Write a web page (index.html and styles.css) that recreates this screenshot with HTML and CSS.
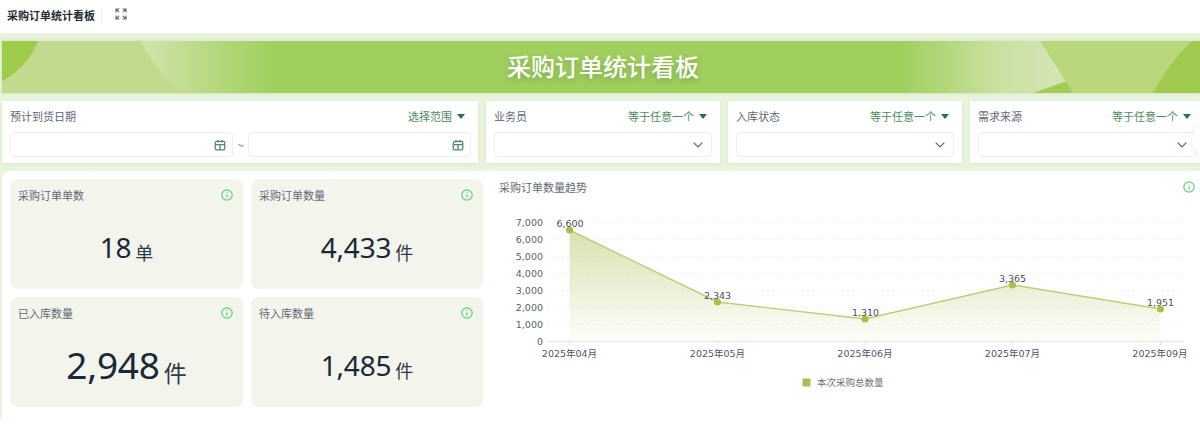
FILE: index.html
```html
<!DOCTYPE html>
<html lang="zh">
<head>
<meta charset="utf-8">
<title>采购订单统计看板</title>
<link rel="stylesheet" href="styles.css">
</head>
<body>
<header class="topbar">
  <span class="topbar-title">采购订单统计看板</span>
  <span class="topbar-div"></span>
  <svg class="fs-icon" viewBox="0 0 12 12" width="12" height="12"><path d="M1 4.500V1h3.500M1 1l3 3M7.500 1H11v3.500M11 1L8 4M1 7.500V11h3.500M1 11l3-3M7.500 11H11V7.500M11 11L8 8"/></svg>
</header>
<main class="page">
  <section class="banner">
    <svg class="banner-art" viewBox="0 0 1198 52" preserveAspectRatio="none" aria-hidden="true">
      <defs>
        <linearGradient id="bl" x1="0" x2="1" y1="0" y2="0"><stop offset="0" stop-color="#d2e4ab"/><stop offset="1" stop-color="#a0cf5e"/></linearGradient>
        <linearGradient id="br" x1="0" x2="1" y1="0" y2="0"><stop offset="0" stop-color="#a0cf5e"/><stop offset="0.55" stop-color="#c9e09f"/><stop offset="1" stop-color="#d7e5b8"/></linearGradient>
      </defs>
      <rect width="1198" height="52" fill="#a0cf5e"/>
      <path d="M0 0H138Q156 32 178 52H0Z" fill="#c1da8d"/>
      <path d="M138 0Q156 32 178 52H270V0Z" fill="url(#bl)"/>
      <path d="M0 40Q26 26 36 0H0Z" fill="#9ecb48"/>
      <path d="M898 0H1038Q1055 25 1071 52H898Z" fill="url(#br)"/>
      <path d="M1031 52L1065 40L1071 52Z" fill="#a4cc55"/>
      <path d="M1038 0H1198V52H1071Q1055 25 1038 0Z" fill="#b8d67a"/>
      <path d="M1190 0Q1168 20 1151 52H1198V0Z" fill="#a0ca4f"/>
    </svg>
    <h1 class="banner-title">采购订单统计看板</h1>
  </section>

  <section class="filters">
    <div class="filter filter-date">
      <div class="filter-head"><span class="filter-label">预计到货日期</span><span class="filter-op">选择范围<i class="caret"></i></span></div>
      <div class="date-row">
        <div class="input"><svg class="cal" viewBox="0 0 12 12" width="12" height="12"><rect x="1.200" y="2.400" width="9.600" height="8.400" rx="1.600"/><path d="M1.200 5.600h9.600M4 1v2.500M8 1v2.500M6 5.600v5.200"/></svg></div>
        <span class="tilde">~</span>
        <div class="input"><svg class="cal" viewBox="0 0 12 12" width="12" height="12"><rect x="1.200" y="2.400" width="9.600" height="8.400" rx="1.600"/><path d="M1.200 5.600h9.600M4 1v2.500M8 1v2.500M6 5.600v5.200"/></svg></div>
      </div>
    </div>
    <div class="filter">
      <div class="filter-head"><span class="filter-label">业务员</span><span class="filter-op">等于任意一个<i class="caret"></i></span></div>
      <div class="input"><svg class="chev" viewBox="0 0 10 6" width="10" height="6"><path d="M.7.7L5 5l4.300-4.300"/></svg></div>
    </div>
    <div class="filter">
      <div class="filter-head"><span class="filter-label">入库状态</span><span class="filter-op">等于任意一个<i class="caret"></i></span></div>
      <div class="input"><svg class="chev" viewBox="0 0 10 6" width="10" height="6"><path d="M.7.7L5 5l4.300-4.300"/></svg></div>
    </div>
    <div class="filter">
      <div class="filter-head"><span class="filter-label">需求来源</span><span class="filter-op">等于任意一个<i class="caret"></i></span></div>
      <div class="input"><svg class="chev" viewBox="0 0 10 6" width="10" height="6"><path d="M.7.7L5 5l4.300-4.300"/></svg></div>
    </div>
  </section>

  <section class="panel">
    <div class="kpis">
      <article class="kpi">
        <div class="kpi-head"><span>采购订单单数</span><svg class="info" viewBox="0 0 12 12" width="12" height="12"><circle cx="6" cy="6" r="5.200"/><path d="M6 5.200v3.400M6 3.200v.9"/></svg></div>
        <div class="kpi-value"><b>18</b><small>单</small></div>
      </article>
      <article class="kpi">
        <div class="kpi-head"><span>采购订单数量</span><svg class="info" viewBox="0 0 12 12" width="12" height="12"><circle cx="6" cy="6" r="5.200"/><path d="M6 5.200v3.400M6 3.200v.9"/></svg></div>
        <div class="kpi-value"><b>4,433</b><small>件</small></div>
      </article>
      <article class="kpi">
        <div class="kpi-head"><span>已入库数量</span><svg class="info" viewBox="0 0 12 12" width="12" height="12"><circle cx="6" cy="6" r="5.200"/><path d="M6 5.200v3.400M6 3.200v.9"/></svg></div>
        <div class="kpi-value kpi-value-lg"><b>2,948</b><small>件</small></div>
      </article>
      <article class="kpi">
        <div class="kpi-head"><span>待入库数量</span><svg class="info" viewBox="0 0 12 12" width="12" height="12"><circle cx="6" cy="6" r="5.200"/><path d="M6 5.200v3.400M6 3.200v.9"/></svg></div>
        <div class="kpi-value"><b>1,485</b><small>件</small></div>
      </article>
    </div>
    <div class="chart">
      <div class="chart-head"><span>采购订单数量趋势</span><svg class="info" viewBox="0 0 12 12" width="12" height="12"><circle cx="6" cy="6" r="5.200"/><path d="M6 5.200v3.400M6 3.200v.9"/></svg></div>
      <svg class="plot" viewBox="0 0 710 210" width="710" height="210">
        <defs>
          <linearGradient id="area" x1="0" x2="0" y1="0" y2="1"><stop offset="0" stop-color="#b5c15f" stop-opacity=".5"/><stop offset="1" stop-color="#b5c15f" stop-opacity=".02"/></linearGradient>
        </defs>
        <g class="grid">
          <path d="M57 16.500H694M57 33.500H694M57 50.500H694M57 67.500H694M57 84.500H694M57 101.500H694M57 118.500H694"/>
        </g>
        <path class="axis" d="M57 135.500H694"/>
        <path class="ticks" d="M79.500 135v4M227.500 135v4M375 135v4M522.500 135v4M670.500 135v4"/>
        <path d="M79.500 24L227.500 96L375 113L522.500 79L670.500 103V135.500H79.500Z" fill="url(#area)"/>
        <path class="line" d="M79.500 24L227.500 96L375 113L522.500 79L670.500 103"/>
        <g class="dots">
          <circle cx="79.500" cy="24" r="3.500"/><circle cx="227.500" cy="96" r="3.500"/><circle cx="375" cy="113" r="3.500"/><circle cx="522.500" cy="79" r="3.500"/><circle cx="670.500" cy="103" r="3.500"/>
        </g>
        <g class="ylab">
          <text x="53" y="20">7,000</text><text x="53" y="37">6,000</text><text x="53" y="54">5,000</text><text x="53" y="71">4,000</text><text x="53" y="88">3,000</text><text x="53" y="105">2,000</text><text x="53" y="122">1,000</text><text x="53" y="139">0</text>
        </g>
        <g class="xlab">
          <text x="79.500" y="151">2025年04月</text><text x="227.500" y="151">2025年05月</text><text x="375" y="151">2025年06月</text><text x="522.500" y="151">2025年07月</text><text x="670" y="151">2025年09月</text>
        </g>
        <g class="vlab">
          <text x="80" y="21">6,600</text><text x="227.500" y="93">2,343</text><text x="375.500" y="110">1,310</text><text x="522.500" y="76">3,365</text><text x="670.500" y="100">1,951</text>
        </g>
        <rect class="legend-sq" x="312.500" y="172.500" width="8" height="8"/>
        <text class="legend-tx" x="327" y="180">本次采购总数量</text>
      </svg>
    </div>
  </section>
</main>
<div class="float-btn"></div>
</body>
</html>
```

FILE: styles.css
```css
* { box-sizing: border-box; }
html, body { margin: 0; height: 424px; overflow: hidden; }
body { background: #fff; font-family: "Noto Sans CJK SC", "Noto Sans", sans-serif; color: #4c5563; position: relative; }

.topbar { height: 33px; background: #fff; display: flex; align-items: center; padding: 0 0 3px 7px; }
.topbar-title { font-size: 11px; font-weight: 700; color: #262b33; line-height: 16px; }
.topbar-div { width: 1px; height: 15px; background: #eceeea; margin-left: 6px; }
.fs-icon { margin: -2px 0 0 13px; fill: none; stroke: #5b6470; stroke-width: 1.1; }

.page { padding: 8px 0 0 2px; width: 1206px; height: 386px; background: #e9f3dd; }

.banner { height: 52px; width: 1198px; position: relative; display: flex; align-items: center; justify-content: center; padding-left: 4px; box-shadow: 0 0 3px rgba(150,180,110,.35); overflow: hidden; }
.banner-art { position: absolute; inset: 0; width: 100%; height: 100%; }
.banner-title { position: relative; margin: 0 0 3px; font-size: 24px; line-height: 32px; font-weight: 500; color: #fff; text-shadow: 0 3px 6px rgba(80,110,50,.4); }

.filters { display: grid; grid-template-columns: 476px 234px 234px 234px; gap: 8px; margin-top: 8px; }
.filter { height: 62px; background: #fff; padding: 7px 8px 0; box-shadow: 0 1px 3px rgba(150,180,110,.15); }
.filter-date { padding-right: 7px; }
.filter-head { display: flex; justify-content: space-between; align-items: center; height: 16px; margin-bottom: 8px; }
.filter-label { font-size: 11px; color: #5f6873; line-height: 16px; }
.filter-op { font-size: 11px; color: #4f8a63; line-height: 16px; display: flex; align-items: center; padding-right: 5px; }
.filter-date .filter-op { padding-right: 6px; }
.caret { width: 0; height: 0; border: 4.500px solid transparent; border-top: 5px solid #2e7040; border-bottom: 0; margin-left: 5px; }

.date-row { display: flex; align-items: center; }
.date-row .input { flex: 1 1 0; }
.tilde { width: 15px; text-align: center; font-size: 12px; color: #6f767e; }
.input { height: 25px; background: #fff; border: 1px solid #eceeeb; border-radius: 4px; display: flex; align-items: center; justify-content: flex-end; padding-right: 6px; }
.filter .input { width: 100%; }
.date-row .input { width: auto; }
.cal { fill: none; stroke: #4f8a63; stroke-width: 1.3; }
.chev { fill: none; stroke: #3f7a52; stroke-width: 1.2; margin-right: 2px; }

.panel { margin-top: 8px; width: 1204px; height: 260px; background: #fff; border-radius: 8px 8px 0 0; padding: 8px; display: flex; }
.kpis { width: 473px; display: grid; grid-template-columns: 233px 232px; grid-auto-rows: 110px; gap: 8px; flex: none; }
.kpi { background: #f3f4ec; border-radius: 8px; padding: 8px 8px 0; display: flex; flex-direction: column; }
.kpi-head { display: flex; justify-content: space-between; align-items: center; height: 16px; font-size: 11px; color: #636b74; line-height: 16px; padding-right: 2px; }
.info { fill: none; stroke: #5ed07f; stroke-width: 1.2; flex: none; }
.kpi-value { flex: 1; display: flex; justify-content: center; align-items: center; color: #1c2738; padding-top: 2px; gap: 4px; }
.kpi-value b { font-family: "Noto Sans", sans-serif; font-weight: 400; font-size: 28px; line-height: 38px; letter-spacing: -.2px; }
.kpi-value small { font-size: 18px; line-height: 20px; margin-top: 10px; color: #303947; font-weight: 400; }
.kpi-value-lg b { font-size: 37px; }
.kpi-value-lg small { font-size: 23px; line-height: 26px; margin-top: 13px; }

.chart { flex: none; width: 712px; padding-left: 8px; position: relative; }
.chart-head { display: flex; justify-content: space-between; align-items: center; height: 16px; font-size: 11px; color: #636b74; line-height: 16px; padding: 0 0 0 8px; width: 704px; }
.plot { display: block; margin: 11px 0 0 -1px; font-family: "DejaVu Sans", "Noto Sans CJK SC", sans-serif; font-size: 9.5px; }
.grid path { fill: none; stroke: #f3f4f1; stroke-dasharray: 2 3; }
.axis { stroke: #e8e9ec; stroke-width: 1.4; fill: none; }
.ticks { stroke: #dfe1e4; fill: none; }
.line { fill: none; stroke: #bfcd78; stroke-width: 1.4; }
.dots circle { fill: #aebd45; }
.ylab text { fill: #59606d; text-anchor: end; font-size: 9.5px; }
.xlab text { fill: #4f5663; text-anchor: middle; font-size: 9.5px; }
.vlab text { fill: #47505e; text-anchor: middle; font-size: 9.5px; }
.legend-sq { fill: #aebd55; }
.legend-tx { fill: #69707a; font-size: 9.5px; font-family: "Noto Sans CJK SC", sans-serif; }

.float-btn { position: absolute; left: 1192px; top: 124px; width: 32px; height: 32px; border-radius: 50%; background: #fff; box-shadow: 0 0 6px rgba(120,130,110,.15); }
```
